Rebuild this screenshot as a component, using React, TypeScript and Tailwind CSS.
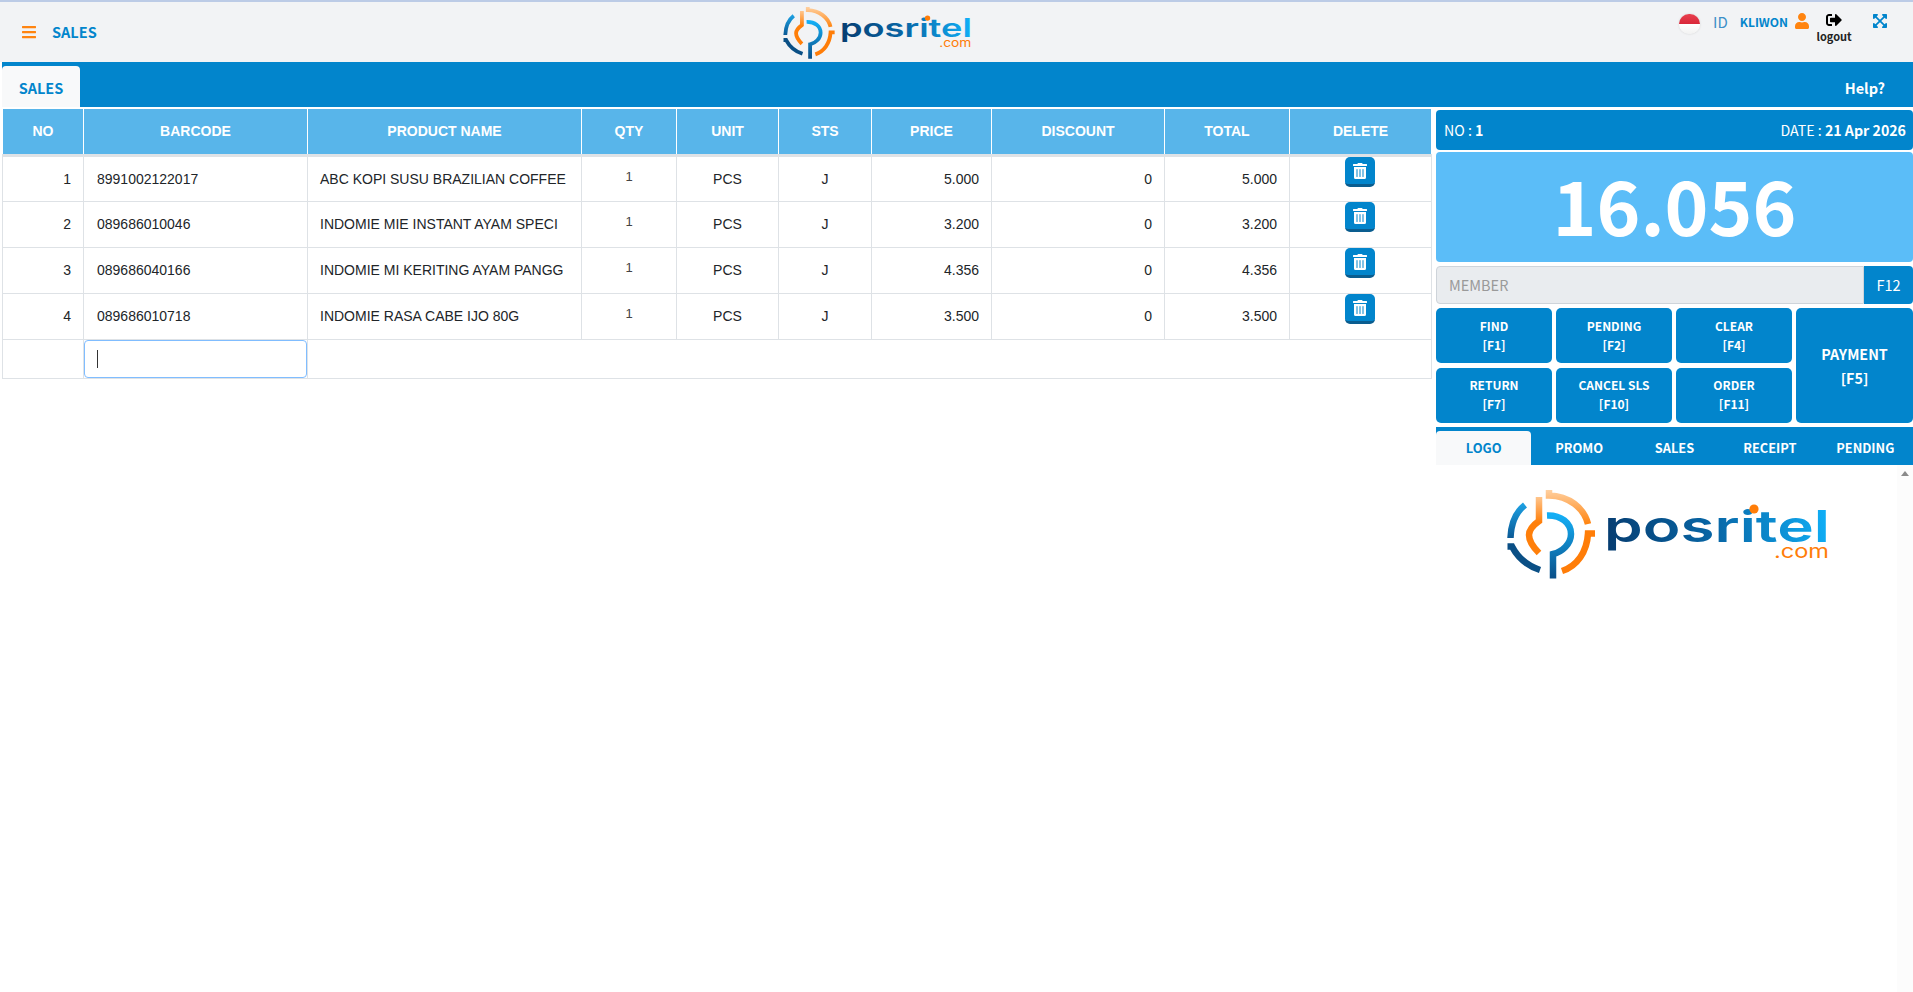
import React, { useId } from "react";
import { FaBars, FaUser, FaSignOutAlt, FaExpandArrowsAlt, FaTrashAlt } from "react-icons/fa";

function Logo({ className }: { className: string }) {
  const id = useId().replace(/:/g, "");
  return (
    <svg viewBox="0 0 321 89" className={className} fill="none" role="img" aria-label="posritel.com">
      <defs>
        <linearGradient id={id + "o"} x1="0" y1="0" x2="0" y2="1"><stop offset="0" stopColor="#ffd0a0" /><stop offset="1" stopColor="#ff8410" /></linearGradient>
        <linearGradient id={id + "i"} x1="0" y1="0" x2="0" y2="1"><stop offset="0" stopColor="#ffc58c" /><stop offset="0.45" stopColor="#ff7f0a" /><stop offset="1" stopColor="#ff7f0a" /></linearGradient>
        <linearGradient id={id + "b"} x1="0" y1="0" x2="0" y2="1"><stop offset="0" stopColor="#14aef5" /><stop offset="1" stopColor="#0a4f88" /></linearGradient>
        <linearGradient id={id + "l"} x1="0" y1="0" x2="0" y2="1"><stop offset="0" stopColor="#1c9ee0" /><stop offset="1" stopColor="#0b5a96" /></linearGradient>
        <linearGradient id={id + "t"} gradientUnits="userSpaceOnUse" x1="100" y1="60" x2="321" y2="20"><stop offset="0" stopColor="#063c70" /><stop offset="0.5" stopColor="#0868a8" /><stop offset="1" stopColor="#10b0f8" /></linearGradient>
      </defs>
      <path d="M42 0V5.5C62 6 77 18 81 34" stroke={`url(#${id}o)`} strokeWidth="6.5" />
      <path d="M88 43.5H81C80 62 70 76 55 81" stroke="#ff7d08" strokeWidth="6.5" />
      <path d="M0.5 56.5H5C11 68 21 76 33 80" stroke="#0a4f85" strokeWidth="6.5" />
      <path d="M18 15C9 22 4 34 3.5 48" stroke={`url(#${id}l)`} strokeWidth="6.5" />
      <path d="M32 7V31C25 36 22 40 22 45C22 51 26 57 32 63" stroke={`url(#${id}i)`} strokeWidth="6.5" />
      <path d="M40 25.5C54 25 64 33 64 44C64 54 55 62 46 64V88.5" stroke={`url(#${id}b)`} strokeWidth="6.5" />
      <text x="97" y="52" fontFamily="Inter, sans-serif" fontWeight="600" fontSize="44" textLength="226" lengthAdjust="spacingAndGlyphs" fill={`url(#${id}t)`}>posritel</text>
      <circle cx="247" cy="19" r="4.6" fill="#ff7d08" />
      <text x="267" y="68" fontFamily="Inter, sans-serif" fontWeight="400" fontSize="20" textLength="55" lengthAdjust="spacingAndGlyphs" fill="#ff7d08">.com</text>
    </svg>
  );
}

const rows = [
  ["1", "8991002122017", "ABC KOPI SUSU BRAZILIAN COFFEE", "5.000"],
  ["2", "089686010046", "INDOMIE MIE INSTANT AYAM SPECI", "3.200"],
  ["3", "089686040166", "INDOMIE MI KERITING AYAM PANGG", "4.356"],
  ["4", "089686010718", "INDOMIE RASA CABE IJO 80G", "3.500"],
];
const cols = ["NO", "BARCODE", "PRODUCT NAME", "QTY", "UNIT", "STS", "PRICE", "DISCOUNT", "TOTAL", "DELETE"];
const cw = ["w-[81px]", "w-[224px]", "w-[274px]", "w-[95px]", "w-[102px]", "w-[93px]", "w-[120px]", "w-[173px]", "w-[125px]", "w-[142px]"];
const td = "border border-[#dee2e6] px-3 align-middle";
const ff = "font-['Noto_Sans_CJK_SC',sans-serif]";

function Fn({ a, b, className }: { a: string; b: string; className: string }) {
  return (
    <div className={`flex flex-col items-center justify-center rounded-[5px] bg-[#0285cc] text-[12px] font-bold leading-[18.5px] text-white ${className}`}>
      <span>{a}</span>
      <span>{b}</span>
    </div>
  );
}

export default function App() {
  return (
    <div className={`min-h-[992px] overflow-hidden bg-white ${ff}`}>
      <header className="grid h-[62px] grid-cols-[782px_190px_1fr] border-t-2 border-[#bccbe6] bg-[#f2f3f5]">
        <div className="flex items-center pl-[21px] text-[#0285cc]">
          <FaBars className="h-[16px] w-[16px] text-[#ff8410]" />
          <span className="ml-[15px] text-[14.5px] font-bold">SALES</span>
        </div>
        <div className="pt-[5px]"><Logo className="h-[52px] w-[190px]" /></div>
        <div className="flex items-start">
          <div className="ml-[707px] mt-[12px] h-[20px] w-[21px] shrink-0 rounded-full bg-[linear-gradient(#e8404f_0,#d9283a_50%,#ffffff_50%,#f2f2f2_100%)] shadow-[0_0_2px_#ccc]" />
          <span className="ml-[13px] mt-[9px] text-[15px] font-normal leading-[22px] text-[#3d8fc8]">ID</span>
          <span className="ml-[12px] mt-[11px] text-[12px] font-bold leading-[18px] text-[#0285cc]">KLIWON</span>
          <FaUser className="ml-[7px] mt-[11px] h-[16px] w-[14px] text-[#ff8410]" />
          <div className="ml-[8px] mt-[10px] flex w-[34px] flex-col items-center">
            <FaSignOutAlt className="h-[16px] w-[16px] text-black" />
            <span className="text-[11px] font-bold leading-[16px] text-[#222]">logout</span>
          </div>
          <FaExpandArrowsAlt className="ml-[21px] mt-[11px] h-[16px] w-[16px] text-[#0285cc]" />
        </div>
      </header>

      <nav className="ml-[2px] flex h-[45px] items-end justify-between bg-[#0285cc] pr-[28px]">
        <div className="flex h-[41px] w-[78px] items-center justify-center rounded-t-[4px] bg-[#f8f9fa] pt-[2px] text-[14.5px] font-bold text-[#0285cc]">SALES</div>
        <span className="pb-[8px] text-[14.5px] font-bold leading-[22px] text-white">Help?</span>
      </nav>

      <div className="mt-[1px] flex items-start pl-[2px]">
        <table className="w-[1429px] table-fixed border-collapse font-['Liberation_Sans',sans-serif] text-[14px] text-[#212529]">
          <thead>
            <tr className="h-[47px] bg-[#58b5ea]">
              {cols.map((c, i) => (
                <th key={c} className={`${cw[i]} border border-white border-b-[#dee2e6] border-b-[3px] text-center text-[14px] font-bold text-white`}>{c}</th>
              ))}
            </tr>
          </thead>
          <tbody>
            {rows.map((r) => (
              <tr key={r[0]} className="h-[46px]">
                <td className={`${td} text-right`}>{r[0]}</td>
                <td className={`${td} !pl-[13px]`}>{r[1]}</td>
                <td className={`${td} whitespace-nowrap`}>{r[2]}</td>
                <td className={`${td} pb-[5px] text-center text-[13px] text-[#444]`}>1</td>
                <td className={`${td} text-center`}>PCS</td>
                <td className={`${td} text-center`}>J</td>
                <td className={`${td} text-right`}>{r[3]}</td>
                <td className={`${td} text-right`}>0</td>
                <td className={`${td} text-right`}>{r[3]}</td>
                <td className={`${td} !align-top !pl-[11px] !pr-[13px] !pt-0`}>
                  <div className="mx-auto flex h-[30px] w-[30px] items-center justify-center rounded-[5px] border-b-[3px] border-[#0a5d8f] bg-[#0285cc] text-white">
                    <FaTrashAlt className="h-[16px] w-[14px]" />
                  </div>
                </td>
              </tr>
            ))}
            <tr className="h-[39px]">
              <td className="border border-[#dee2e6]" />
              <td className="border border-[#dee2e6] p-0">
                <div className="flex h-[38px] items-center rounded-[4px] border border-[#80bdff] pl-[12px]">
                  <span className="h-[18px] w-px bg-[#333]" />
                </div>
              </td>
              <td colSpan={8} className="border border-[#dee2e6]" />
            </tr>
          </tbody>
        </table>

        <aside className="ml-[4px] flex w-[477px] flex-col pt-[2px]">
          <div className="flex h-[40px] items-center justify-between rounded-[4px] bg-[#0285cc] pl-[8px] pr-[7px] pt-[2px] text-[14.2px] text-white">
            <span>NO : <b>1</b></span>
            <span>DATE : <b>21 Apr 2026</b></span>
          </div>
          <div className="mt-[2px] flex h-[110px] items-center justify-center rounded-[4px] bg-[#5bbdf8] pb-[5px] text-[74.5px] font-bold leading-none text-white">16.056</div>
          <div className="mt-[4px] flex h-[38px]">
            <div className="flex flex-1 items-center rounded-l-[4px] border border-[#ced4da] bg-[#e9ecef] pl-[12px] text-[14.5px] text-[#9a9a9a]">MEMBER</div>
            <div className="flex w-[49px] items-center justify-center rounded-r-[4px] bg-[#0285cc] text-[14.5px] text-white">F12</div>
          </div>
          <div className="mt-[4px] grid grid-cols-[116px_116px_116px_117px] grid-rows-[55px_55px] gap-x-[4px] gap-y-[5px]">
            <Fn a="FIND" b="[F1]" className="" />
            <Fn a="PENDING" b="[F2]" className="" />
            <Fn a="CLEAR" b="[F4]" className="" />
            <Fn a="PAYMENT" b="[F5]" className="row-span-2 !text-[14.3px] !leading-[24px]" />
            <Fn a="RETURN" b="[F7]" className="pb-[2px]" />
            <Fn a="CANCEL SLS" b="[F10]" className="pb-[2px]" />
            <Fn a="ORDER" b="[F11]" className="pb-[2px]" />
          </div>
          <div className="mt-[4px] grid h-[38px] grid-cols-5 items-end bg-[#0285cc] text-[12.8px] font-bold text-white">
            {["LOGO", "PROMO", "SALES", "RECEIPT", "PENDING"].map((t, i) => (
              <div key={t} className={`flex h-[34px] items-center justify-center ${i === 0 ? "rounded-t-[4px] bg-[#f8f9fa] text-[#0285cc]" : ""}`}>{t}</div>
            ))}
          </div>
          <div className="flex h-[527px]">
            <div className="flex-1 pl-[71px] pt-[25px]"><Logo className="h-[89px] w-[321px]" /></div>
            <div className="flex w-[16px] justify-center bg-[#fcfcfc] pt-[6px]">
              <div className="h-0 w-0 border-x-[4px] border-b-[5px] border-x-transparent border-b-[#8a8a8a]" />
            </div>
          </div>
        </aside>
      </div>
    </div>
  );
}
